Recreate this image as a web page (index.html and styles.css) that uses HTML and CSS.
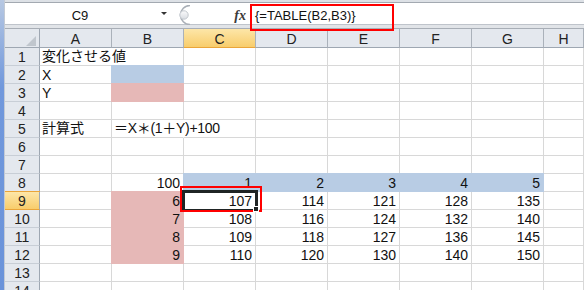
FILE: index.html
```html
<!DOCTYPE html>
<html lang="ja">
<head>
  <meta charset="UTF-8" />
  <title>TABLE関数 - データテーブル</title>
  <link rel="stylesheet" href="styles.css">
</head>
<body>
  <div class="window">
    <div class="edge"></div>
    <div class="main">
      <div class="top-strip"></div>

      <!-- name box + formula bar -->
      <div class="formula-bar">
        <div class="name-box">
          <span class="name">C9</span>
          <span class="arrow"></span>
        </div>
        <svg class="splitter" width="19" height="20" viewBox="0 0 19 20">
          <defs>
            <linearGradient id="knob" x1="0" y1="0" x2="0" y2="1">
              <stop offset="0" stop-color="#fbfbfc" />
              <stop offset="1" stop-color="#d9dde2" />
            </linearGradient>
          </defs>
          <path d="M18 0.5 A 9.5 9.5 0 0 0 18 19.5" fill="none" stroke="#a9afb7" stroke-width="1.6" />
          <circle cx="12" cy="10" r="4.2" fill="url(#knob)" stroke="#c3c8ce" stroke-width="1" />
        </svg>
        <div class="fx">fx</div>
        <div class="formula">
          <span>{=TABLE(B2,B3)}</span>
          <span class="mark formula-mark"></span>
        </div>
      </div>
      <div class="bar-gap"></div>

      <!-- worksheet -->
      <div class="sheet">
        <div class="corner"><span class="tri"></span></div>
        <div class="ch">A</div><div class="ch">B</div><div class="ch on">C</div><div class="ch">D</div>
        <div class="ch">E</div><div class="ch">F</div><div class="ch">G</div><div class="ch">H</div>

        <div class="rh">1</div>
        <div class="c jp spill">変化させる値</div><div class="c"></div><div class="c"></div><div class="c"></div>
        <div class="c"></div><div class="c"></div><div class="c"></div><div class="c"></div>

        <div class="rh">2</div>
        <div class="c">X</div><div class="c blue"></div><div class="c"></div><div class="c"></div>
        <div class="c"></div><div class="c"></div><div class="c"></div><div class="c"></div>

        <div class="rh">3</div>
        <div class="c">Y</div><div class="c pink"></div><div class="c"></div><div class="c"></div>
        <div class="c"></div><div class="c"></div><div class="c"></div><div class="c"></div>

        <div class="rh">4</div>
        <div class="c"></div><div class="c"></div><div class="c"></div><div class="c"></div>
        <div class="c"></div><div class="c"></div><div class="c"></div><div class="c"></div>

        <div class="rh">5</div>
        <div class="c jp">計算式</div><div class="c jp spill expr">＝X＊(1＋Y)+100</div><div class="c"></div><div class="c"></div>
        <div class="c"></div><div class="c"></div><div class="c"></div><div class="c"></div>

        <div class="rh">6</div>
        <div class="c"></div><div class="c"></div><div class="c"></div><div class="c"></div>
        <div class="c"></div><div class="c"></div><div class="c"></div><div class="c"></div>

        <div class="rh">7</div>
        <div class="c"></div><div class="c"></div><div class="c"></div><div class="c"></div>
        <div class="c"></div><div class="c"></div><div class="c"></div><div class="c"></div>

        <div class="rh">8</div>
        <div class="c"></div><div class="c n">100</div><div class="c n blue">1</div><div class="c n blue">2</div>
        <div class="c n blue">3</div><div class="c n blue">4</div><div class="c n blue">5</div><div class="c"></div>

        <div class="rh on">9</div>
        <div class="c"></div><div class="c n pink">6</div>
        <div class="c n active">107<span class="mark cell-mark"></span></div>
        <div class="c n">114</div><div class="c n">121</div><div class="c n">128</div><div class="c n">135</div><div class="c"></div>

        <div class="rh">10</div>
        <div class="c"></div><div class="c n pink">7</div><div class="c n">108</div><div class="c n">116</div>
        <div class="c n">124</div><div class="c n">132</div><div class="c n">140</div><div class="c"></div>

        <div class="rh">11</div>
        <div class="c"></div><div class="c n pink">8</div><div class="c n">109</div><div class="c n">118</div>
        <div class="c n">127</div><div class="c n">136</div><div class="c n">145</div><div class="c"></div>

        <div class="rh">12</div>
        <div class="c"></div><div class="c n pink">9</div><div class="c n">110</div><div class="c n">120</div>
        <div class="c n">130</div><div class="c n">140</div><div class="c n">150</div><div class="c"></div>

        <div class="rh">13</div>
        <div class="c"></div><div class="c"></div><div class="c"></div><div class="c"></div>
        <div class="c"></div><div class="c"></div><div class="c"></div><div class="c"></div>

        <div class="rh">14</div>
        <div class="c"></div><div class="c"></div><div class="c"></div><div class="c"></div>
        <div class="c"></div><div class="c"></div><div class="c"></div><div class="c"></div>
      </div>
    </div>
  </div>
</body>
</html>
```

FILE: styles.css
```css
body {
  margin: 0;
  width: 584px;
  height: 290px;
  overflow: hidden;
  background: #fff;
  font-family: "Liberation Sans", "Noto Sans CJK JP", sans-serif;
  color: #111;
}

.window {
  display: flex;
  height: 290px;
}

.edge {
  width: 4px;
  flex: none;
  background: linear-gradient(#b7c8e2, #7198dc 30%, #6a93da);
  border-right: 1px solid #c3cad4;
}

.main {
  flex: 1;
  min-width: 0;
}

.top-strip {
  height: 2px;
  background: #dde1e6;
}

/* formula bar */
.formula-bar {
  display: flex;
  height: 21px;
  border-top: 1px solid #a3a9b1;
  background: #fff;
}

.name-box {
  width: 167px;
  display: flex;
  align-items: center;
}

.name {
  width: 150px;
  text-align: center;
  font-size: 13px;
  line-height: 15px;
  padding-top: 4px;
}

.arrow {
  margin-left: 6px;
  width: 0;
  height: 0;
  border-left: 3px solid transparent;
  border-right: 3px solid transparent;
  border-top: 3px solid #333;
}

.splitter {
  margin-top: 2px;
  flex: none;
}

.fx {
  width: 57px;
  display: flex;
  justify-content: flex-end;
  padding-right: 2px;
  box-sizing: border-box;
  font: italic bold 14px/15px "Liberation Serif", serif;
  color: #3a3a3a;
  padding-top: 5px;
}

.formula {
  flex: 1;
  position: relative;
  padding: 5px 0 0 7px;
  font-size: 13px;
  line-height: 15px;
}

.bar-gap {
  height: 3px;
  background: #e1e4e8;
  border-top: 1px solid #bfc4cb;
  border-bottom: 1px solid #a8aeb6;
}

/* red annotation boxes */
.mark {
  position: absolute;
  border: 2px solid #ff0000;
}

.formula-mark {
  left: 2px;
  top: 1px;
  width: 140px;
  height: 23px;
}

.cell-mark {
  left: -4px;
  top: -6px;
  right: -7px;
  bottom: -3px;
}

/* worksheet grid */
.sheet {
  display: grid;
  grid-template-columns: 35px repeat(7, 72px) 1fr;
  grid-template-rows: 19px;
  grid-auto-rows: 18px;
  font-size: 14px;
}

.corner, .ch, .rh {
  background: #e4e8ee;
  color: #222;
  text-align: center;
  font-size: 14px;
  line-height: 15px;
}

.corner {
  display: flex;
  justify-content: flex-end;
  align-items: flex-end;
  padding: 0 3px 1px 0;
  border-right: 1px solid #9ea7b2;
  border-bottom: 1px solid #9ea7b2;
}

.tri {
  width: 0;
  height: 0;
  border-left: 10px solid transparent;
  border-bottom: 10px solid #c0c6cd;
}

.ch {
  padding-top: 3px;
  border-right: 1px solid #aab1ba;
  border-bottom: 1px solid #9ea7b2;
}

.rh {
  padding-top: 2px;
  border-right: 1px solid #9ea7b2;
  border-bottom: 1px solid #c8ced6;
}

.ch.on, .rh.on {
  background: linear-gradient(#fde6a8, #f8cd6c);
  border-bottom-color: #eaa53a;
}

.rh.on {
  box-shadow: 0 -1px 0 #eaa53a;
}

.c {
  border-right: 1px solid #d8d8d8;
  border-bottom: 1px solid #d8d8d8;
  padding: 3px 3px 0 2px;
  line-height: 13px;
  white-space: nowrap;
}

.c.n {
  text-align: right;
}

.c.jp {
  padding-top: 2px;
}

.c.spill {
  border-right-color: transparent;
}

.c.expr {
  letter-spacing: -0.3px;
}

.blue {
  background: #b8cce4;
  border-color: #b8cce4;
  box-shadow: -1px 0 0 #b8cce4, 0 -1px 0 #b8cce4, -1px -1px 0 #b8cce4;
}

.pink {
  background: #e6b8b7;
  border-color: #e6b8b7;
  box-shadow: -1px 0 0 #e6b8b7, 0 -1px 0 #e6b8b7, -1px -1px 0 #e6b8b7;
}

/* active cell C9 */
.active {
  position: relative;
}

.active::before {
  content: "";
  position: absolute;
  left: -2px;
  top: -2px;
  right: -3px;
  bottom: -3px;
  border: 3px solid #1f2424;
}

.active::after {
  content: "";
  position: absolute;
  right: -4px;
  bottom: -3px;
  width: 4px;
  height: 4px;
  background: #1f2424;
  border: 1px solid #fff;
}
```
